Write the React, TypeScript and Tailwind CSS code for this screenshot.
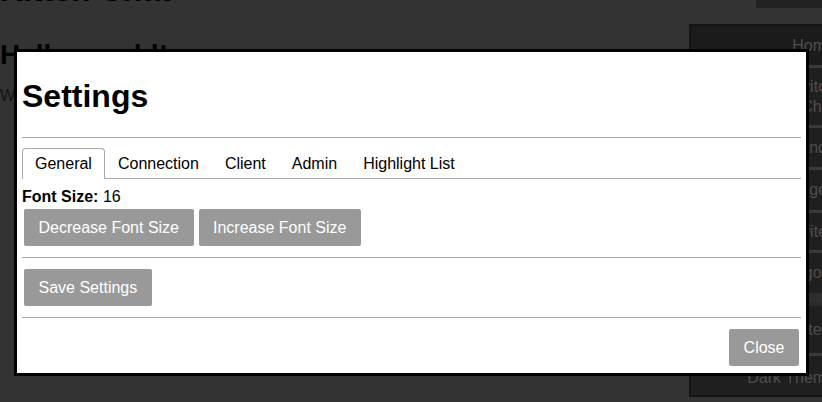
import React from "react";

const font = "font-['Liberation_Sans',Arial,sans-serif]";

const navItems = [
  { label: "Switch\nChat", h: "h-[60px]" },
  { label: "Commands", h: "h-[42px]" },
  { label: "Messages", h: "h-[43px]" },
  { label: "Invites", h: "h-[40px]" },
  { label: "Logout", h: "h-[43px]" },
];

const tabs = ["General", "Connection", "Client", "Admin", "Highlight List"];

function GrayButton({ children, className = "" }: { children: React.ReactNode; className?: string }) {
  return (
    <button
      className={`h-[37px] rounded-[2px] bg-[#999999] px-[14.5px] text-[16px] leading-[18px] text-white ${className}`}
    >
      {children}
    </button>
  );
}

function Sidebar() {
  return (
    <div className="mt-[24px] w-[160px] shrink-0 self-start border-2 border-[#141414] bg-[#1f1f1f] pr-[12px] text-right text-[16px] leading-[20px] text-[#4d4d4d]">
      <div className="flex h-[39px] items-center justify-end bg-[#1b1b1b]">Home</div>
      {navItems.map((item) => (
        <div key={item.label} className={`flex ${item.h} items-center justify-end whitespace-pre-line border-t-[3px] border-[#3a3a3a]`}>
          {item.label}
        </div>
      ))}
      <div className="h-[10px] bg-[#2e2e2e]" />
      <div className="flex h-[50px] items-center justify-end border-t-[3px] border-[#2a2a2a]">System</div>
      <div className="flex h-[42px] items-center justify-end border-t-[3px] border-[#3a3a3a] pt-[4px]">Dark Theme</div>
    </div>
  );
}

function SettingsModal() {
  return (
    <div className="absolute left-[14px] top-[49px] w-[795px] border-[3px] border-black bg-white px-[5px] pb-[7px] pt-[26px] text-black">
      <h1 className="text-[32px] font-bold leading-[37px]">Settings</h1>
      <div className="mt-[22px] border-t border-[#aaaaaa]" />

      {/* tabs */}
      <div className="mt-[10px] flex border-b border-[#aaaaaa] text-[16px] leading-[18px]">
        {tabs.map((t, i) => (
          <div
            key={t}
            className={
              i === 0
                ? "-mb-px rounded-t-[4px] border border-b-0 border-[#aaaaaa] bg-white px-[12px] pb-[6px] pt-[6px]"
                : "border border-b-0 border-transparent px-[12px] pb-[5px] pt-[6px]"
            }
          >
            {t}
          </div>
        ))}
      </div>

      <div className="mt-[9px] text-[16px] leading-[18px]">
        <b>Font Size:</b> 16
      </div>
      <div className="ml-[2px] mt-[3px] flex gap-[5px]">
        <GrayButton>Decrease Font Size</GrayButton>
        <GrayButton>Increase Font Size</GrayButton>
      </div>

      <div className="mt-[11px] border-t border-[#aaaaaa]" />
      <div className="ml-[2px] mt-[11px] flex">
        <GrayButton>Save Settings</GrayButton>
      </div>

      <div className="mt-[11px] border-t border-[#aaaaaa]" />
      <div className="mr-[2px] mt-[11px] flex justify-end">
        <GrayButton>Close</GrayButton>
      </div>
    </div>
  );
}

export default function App() {
  return (
    <div className={`relative flex h-[402px] w-[822px] overflow-hidden bg-[#333333] ${font}`}>
      <div className="w-[689px] shrink-0">
        <h1 className="-mt-[28px] text-[32px] font-bold leading-[37px] text-black">Kitten Chat</h1>
        <h2 className="mt-[30px] text-[28px] font-bold leading-[32px] text-black">Hello, world!</h2>
        <p className="mt-[16px] text-[16px] leading-[18px] text-[#141414]">Welcome to the chat! Pick a room to begin.</p>
      </div>
      <div className="w-0 shrink-0">
        <div className="ml-[67px] h-[8px] w-[80px] bg-[#222222]" />
      </div>
      <Sidebar />
      <SettingsModal />
    </div>
  );
}
